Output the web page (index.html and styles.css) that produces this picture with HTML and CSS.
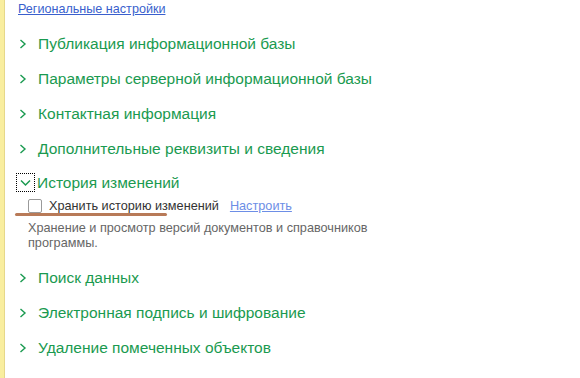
FILE: index.html
```html
<!DOCTYPE html>
<html lang="ru">
<head>
    <meta charset="UTF-8">
    <title>Администрирование</title>
    <link rel="stylesheet" href="styles.css">
</head>
<body>
    <div class="page">
        <div class="content">
            <a href="#" class="top-link">Региональные настройки</a>

            <div class="group"><span class="chevron"><svg width="8" height="10" viewBox="0 0 8 10"><path d="M1.5 1 L6 5 L1.5 9" fill="none" stroke="#1a9a50" stroke-width="1.4"/></svg></span>Публикация информационной базы</div>
            <div class="group"><span class="chevron"><svg width="8" height="10" viewBox="0 0 8 10"><path d="M1.5 1 L6 5 L1.5 9" fill="none" stroke="#1a9a50" stroke-width="1.4"/></svg></span>Параметры серверной информационной базы</div>
            <div class="group"><span class="chevron"><svg width="8" height="10" viewBox="0 0 8 10"><path d="M1.5 1 L6 5 L1.5 9" fill="none" stroke="#1a9a50" stroke-width="1.4"/></svg></span>Контактная информация</div>
            <div class="group"><span class="chevron"><svg width="8" height="10" viewBox="0 0 8 10"><path d="M1.5 1 L6 5 L1.5 9" fill="none" stroke="#1a9a50" stroke-width="1.4"/></svg></span>Дополнительные реквизиты и сведения</div>

            <div class="group open">
                <span class="toggle">
                    <svg width="13" height="8" viewBox="0 0 13 8"><path d="M2 1.5 L6.5 6 L11 1.5" fill="none" stroke="#1a9a50" stroke-width="1.5"/></svg>
                </span>История изменений
            </div>
            <div class="option">
                <span class="checkbox"></span>
                <span class="option-label">Хранить историю изменений</span>
                <a href="#" class="setup-link">Настроить</a>
                <span class="mark"></span>
            </div>
            <div class="hint">Хранение и просмотр версий документов и справочников<br>программы.</div>

            <div class="group"><span class="chevron"><svg width="8" height="10" viewBox="0 0 8 10"><path d="M1.5 1 L6 5 L1.5 9" fill="none" stroke="#1a9a50" stroke-width="1.4"/></svg></span>Поиск данных</div>
            <div class="group"><span class="chevron"><svg width="8" height="10" viewBox="0 0 8 10"><path d="M1.5 1 L6 5 L1.5 9" fill="none" stroke="#1a9a50" stroke-width="1.4"/></svg></span>Электронная подпись и шифрование</div>
            <div class="group"><span class="chevron"><svg width="8" height="10" viewBox="0 0 8 10"><path d="M1.5 1 L6 5 L1.5 9" fill="none" stroke="#1a9a50" stroke-width="1.4"/></svg></span>Удаление помеченных объектов</div>
        </div>
    </div>
</body>
</html>
```

FILE: styles.css
```css
body {
    margin: 0;
    font-family: 'Liberation Sans', Arial, sans-serif;
    background-color: white;
}

.page {
    min-height: 378px;
    border-left: 4px solid #f9ee9f;
    box-shadow: inset 1px 0 0 #e6d88a;
}

.content {
    padding: 2px 0 0 14px;
}

.top-link {
    display: block;
    font-size: 12.6px;
    line-height: 15px;
    color: #3a5fcd;
    margin-bottom: 9px;
}

.group {
    display: flex;
    align-items: center;
    height: 35px;
    font-size: 15.5px;
    color: #1a9a50;
}

.chevron {
    display: flex;
    width: 19px;
    padding-left: 1px;
}

.group.open {
    height: 19px;
    margin-top: 7px;
}

.toggle {
    display: flex;
    align-items: center;
    justify-content: center;
    width: 19px;
    height: 19px;
    margin-left: -2px;
    margin-right: 2px;
    border: 1px dotted #000;
    box-sizing: border-box;
}

.option {
    position: relative;
    display: flex;
    align-items: center;
    margin: 7px 0 0 10px;
    font-size: 12.7px;
    color: #333;
}

.checkbox {
    width: 14px;
    height: 14px;
    border: 1px solid #9a9a9a;
    border-radius: 2px;
    margin-right: 7px;
    box-sizing: border-box;
}

.setup-link {
    margin-left: 11px;
    color: #6d8ee6;
}

.mark {
    position: absolute;
    left: -13px;
    top: 14px;
    width: 152px;
    height: 3px;
    border-radius: 2px;
    background-color: #b87a58;
}

.hint {
    margin: 8px 0 9px 10px;
    font-size: 12.7px;
    line-height: 15px;
    color: #666;
}
```
